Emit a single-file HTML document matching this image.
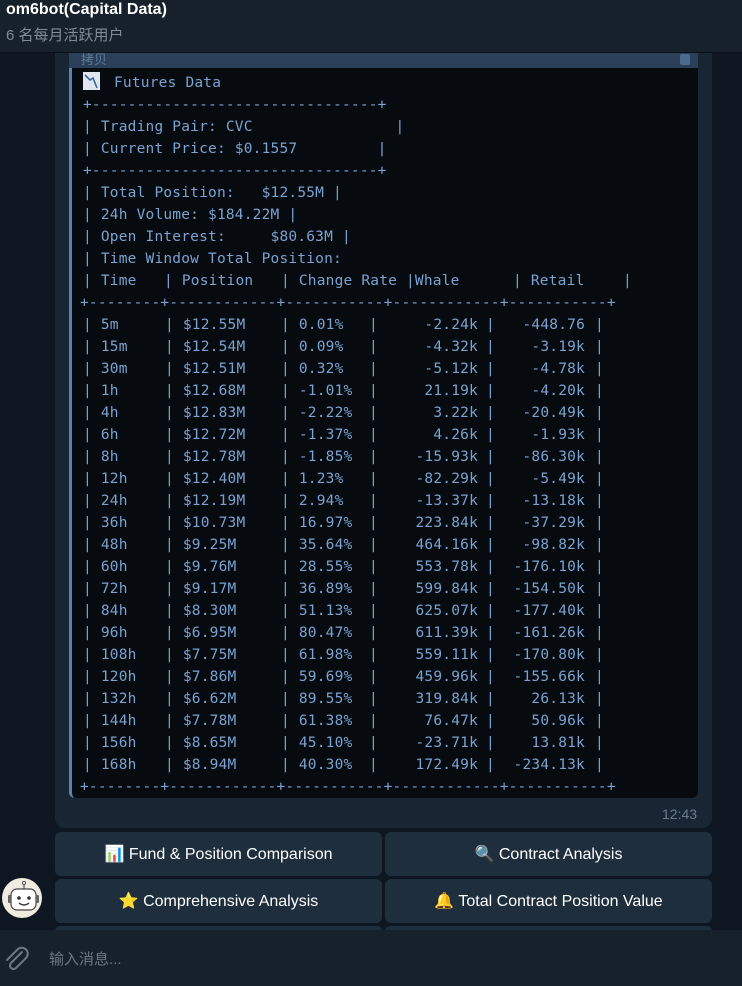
<!DOCTYPE html>
<html><head><meta charset="utf-8">
<style>
*{margin:0;padding:0;box-sizing:border-box}
body{width:742px;height:986px;background:#0e1621;position:relative;overflow:hidden;font-family:"Liberation Sans","Noto Sans CJK SC",sans-serif}
.hdr{position:absolute;left:0;top:0;width:742px;height:53px;background:#17212b;border-bottom:1px solid #0b1118}
.t1{position:absolute;left:6px;top:1px;color:#fff;font-size:16px;font-weight:bold}
.t2{position:absolute;left:6px;top:24px;color:#7f8b97;font-size:15px}
.bub{position:absolute;left:55px;top:40px;width:657px;height:788px;background:#182533;border-radius:10px}
.cbar{position:absolute;left:69px;top:53px;width:629px;height:16px;background:#2b4058}
.cbar span{position:absolute;left:12px;top:-4px;color:#5d7a99;font-size:13px}
.code{position:absolute;left:69px;top:68px;width:629px;height:730px;background:#070b10;border-left:3px solid #5b84b1;border-radius:0 0 6px 6px}
.m{position:absolute;font-family:"DejaVu Sans Mono","Liberation Mono",monospace;font-size:14.5px;letter-spacing:0.2px;color:#79a3d0;white-space:pre;line-height:22px}
.r{text-align:right}
.time{position:absolute;left:662px;top:806px;color:#6b7c8c;font-size:14px}
.btn{position:absolute;height:44px;background:#1f2e3d;border-radius:6px;color:#fff;font-size:16px;display:flex;align-items:center;justify-content:center;gap:6px}
.inp{position:absolute;left:0;top:930px;width:742px;height:56px;background:#17212b}
.inp span{position:absolute;left:49px;top:18px;color:#6b7783;font-size:15px}
.av{position:absolute;left:2px;top:878px;width:40px;height:40px;border-radius:50%;background:#f1ece0}
</style></head><body>
<div class="bub"></div>
<div class="cbar"><span>拷贝</span><i style="position:absolute;right:8px;top:1px;width:10px;height:11px;background:#4c6a8c;border-radius:2px"></i></div>
<div class="code"></div>
<div class="m" style="left:83px;top:72px"><span style="display:inline-block;width:17px;height:18px;background:#dfe6ee;vertical-align:-3px;margin-right:14px;position:relative"><svg width="17" height="18" style="position:absolute;left:0;top:0"><path d="M2 3 L7 8 L10 6 L14 16" stroke="#3a66a0" stroke-width="1.6" fill="none"/></svg></span>Futures Data</div>
<div class="m" style="left:83px;top:94px">+--------------------------------+</div>
<div class="m" style="left:83px;top:116px">| Trading Pair: CVC                |</div>
<div class="m" style="left:83px;top:138px">| Current Price: $0.1557         |</div>
<div class="m" style="left:83px;top:160px">+--------------------------------+</div>
<div class="m" style="left:83px;top:182px">| Total Position:   $12.55M |</div>
<div class="m" style="left:83px;top:204px">| 24h Volume: $184.22M |</div>
<div class="m" style="left:83px;top:226px">| Open Interest:     $80.63M |</div>
<div class="m" style="left:83px;top:248px">| Time Window Total Position:</div>
<div class="m" style="left:83px;top:270px">| Time   </div><div class="m" style="left:164px;top:270px">| Position   </div><div class="m" style="left:281px;top:270px">| Change Rate </div><div class="m" style="left:406px;top:270px">|Whale      </div><div class="m" style="left:513px;top:270px">| Retail    </div><div class="m" style="left:623px;top:270px">|</div>
<div class="m" style="left:80px;top:292px">+--------+------------+-----------+------------+-----------+</div>
<div id="rows"></div>
<div class="m" style="left:80px;top:776px">+--------+------------+-----------+------------+-----------+</div>
<script>
var d=[["5m","$12.55M","0.01%","-2.24k","-448.76"],["15m","$12.54M","0.09%","-4.32k","-3.19k"],["30m","$12.51M","0.32%","-5.12k","-4.78k"],["1h","$12.68M","-1.01%","21.19k","-4.20k"],["4h","$12.83M","-2.22%","3.22k","-20.49k"],["6h","$12.72M","-1.37%","4.26k","-1.93k"],["8h","$12.78M","-1.85%","-15.93k","-86.30k"],["12h","$12.40M","1.23%","-82.29k","-5.49k"],["24h","$12.19M","2.94%","-13.37k","-13.18k"],["36h","$10.73M","16.97%","223.84k","-37.29k"],["48h","$9.25M","35.64%","464.16k","-98.82k"],["60h","$9.76M","28.55%","553.78k","-176.10k"],["72h","$9.17M","36.89%","599.84k","-154.50k"],["84h","$8.30M","51.13%","625.07k","-177.40k"],["96h","$6.95M","80.47%","611.39k","-161.26k"],["108h","$7.75M","61.98%","559.11k","-170.80k"],["120h","$7.86M","59.69%","459.96k","-155.66k"],["132h","$6.62M","89.55%","319.84k","26.13k"],["144h","$7.78M","61.38%","76.47k","50.96k"],["156h","$8.65M","45.10%","-23.71k","13.81k"],["168h","$8.94M","40.30%","172.49k","-234.13k"]];
var h="";
d.forEach(function(r,i){var t=314+i*22;
h+='<div class="m" style="left:83px;top:'+t+'px">| '+r[0]+'</div>';
h+='<div class="m" style="left:165px;top:'+t+'px">| '+r[1]+'</div>';
h+='<div class="m" style="left:281px;top:'+t+'px">| '+r[2]+'</div>';
h+='<div class="m" style="left:369px;top:'+t+'px">|</div>';
h+='<div class="m r" style="left:378px;width:100px;top:'+t+'px">'+r[3]+'</div>';
h+='<div class="m" style="left:486px;top:'+t+'px">|</div>';
h+='<div class="m r" style="left:488px;width:97px;top:'+t+'px">'+r[4]+'</div>';
h+='<div class="m" style="left:595px;top:'+t+'px">|</div>';});
document.getElementById("rows").innerHTML=h;
</script>
<div class="time">12:43</div>
<div class="btn" style="left:55px;top:832px;width:327px">📊 Fund &amp; Position Comparison</div>
<div class="btn" style="left:385px;top:832px;width:327px">🔍 Contract Analysis</div>
<div class="btn" style="left:55px;top:879px;width:327px">⭐ Comprehensive Analysis</div>
<div class="btn" style="left:385px;top:879px;width:327px">🔔 Total Contract Position Value</div>
<div class="btn" style="left:55px;top:926px;width:327px;height:10px"></div>
<div class="btn" style="left:385px;top:926px;width:327px;height:10px"></div>
<div class="av"><svg width="40" height="40"><line x1="22" y1="6" x2="22" y2="11" stroke="#555" stroke-width="1.2"/><circle cx="22" cy="5" r="1.6" fill="none" stroke="#555"/><rect x="9" y="11" width="25" height="21" rx="6" fill="#fff" stroke="#444" stroke-width="1.2"/><rect x="6" y="17" width="3" height="8" rx="1" fill="#666"/><rect x="34" y="17" width="3" height="8" rx="1" fill="#666"/><circle cx="17" cy="20" r="1.8" fill="#333"/><circle cx="27" cy="20" r="1.8" fill="#333"/><path d="M17 25 Q22 29 27 25" stroke="#333" stroke-width="1.4" fill="none"/></svg></div>
<div class="hdr"><div class="t1">om6bot(Capital Data)</div><div class="t2">6 名每月活跃用户</div></div>
<div class="inp"><svg width="30" height="30" style="position:absolute;left:2px;top:14px"><path d="M20 8 L9 19 a3.5 3.5 0 0 0 5 5 L24 14 a6 6 0 0 0 -8.5 -8.5 L5 16" stroke="#6b7783" stroke-width="2" fill="none" stroke-linecap="round"/></svg><span>输入消息...</span></div>
</body></html>
